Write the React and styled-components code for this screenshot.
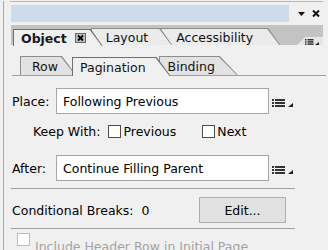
import React from "react";
import styled, { createGlobalStyle } from "styled-components";

const GlobalStyle = createGlobalStyle`
  html, body {
    margin: 0;
    padding: 0;
    background: #f0f0f0;
  }
  body {
    font-family: "DejaVu Sans", "Liberation Sans", sans-serif;
    font-size: 12.5px;
    color: #000;
    overflow: hidden;
  }
`;

const Window = styled.div`
  margin-left: 3px;
  width: 325px;
  height: 250px;
  border-left: 1px solid #a8a8a8;
  box-sizing: border-box;
`;

const Header = styled.div`
  margin: 1px 0 0 6px;
  width: 313px;
  border-top: 1px solid #b8b8b8;
  padding-left: 1px;
  box-sizing: border-box;
`;

const TitleBar = styled.div`
  display: flex;
  align-items: center;
  margin-top: 3px;
  height: 17px;
`;

const Grip = styled.div`
  width: 278px;
  height: 17px;
  background: #cddcea;
`;

const CtrlIcon = styled.svg`
  display: block;
  margin-left: ${(p) => p.$gap}px;
`;

const TabStrip = styled.div`
  display: flex;
  align-items: flex-end;
  margin-top: 3px;
  width: 312px;
  height: 20px;
  padding-left: 2px;
  box-sizing: border-box;
  background: #c3c3c3;
`;

const Tab = styled.div`
  position: relative;
  z-index: ${(p) => p.$z};
  height: ${(p) => p.$h}px;
  margin-left: ${(p) => p.$overlap}px;
  margin-bottom: ${(p) => (p.$active ? -1 : 0)}px;
  padding: 1px 1px 0 1px;
  box-sizing: border-box;
  background: ${(p) => (p.$active ? "#6f6f6f" : "#8d8d8d")};
  clip-path: polygon(0 0, calc(100% - ${(p) => p.$slant}px) 0, 100% 100%, 0 100%);
`;

const TabFace = styled.div`
  display: flex;
  align-items: center;
  gap: 8px;
  height: 100%;
  padding: ${(p) => p.$pad};
  box-sizing: border-box;
  white-space: nowrap;
  font-weight: ${(p) => (p.$bold ? 700 : 400)};
  color: ${(p) => (p.$bold ? "#1a1a1a" : "#111")};
  background: ${(p) => (p.$active ? "#f0f0f0" : p.$fill)};
  clip-path: polygon(0 0, calc(100% - ${(p) => p.$slant}px) 0, 100% 100%, 0 100%);
`;

const StripMenu = styled.div`
  display: flex;
  align-items: flex-end;
  justify-content: flex-end;
  margin-left: auto;
  width: 26px;
  height: 8px;
  padding-right: 4px;
  box-sizing: border-box;
  background: #e6e6e6;
  clip-path: polygon(8px 0, 100% 0, 100% 100%, 0 100%);
`;

const Body = styled.div`
  padding: 0 2px 0 8px;
`;

const SubTabBar = styled.div`
  display: flex;
  align-items: flex-end;
  height: 30px;
  padding-left: 8px;
  border-bottom: 1px solid #a0a0a0;
  box-sizing: content-box;
`;

const FieldRow = styled.div`
  display: flex;
  align-items: center;
  margin-top: ${(p) => p.$top}px;
`;

const Label = styled.span`
  width: ${(p) => p.$w}px;
  flex: none;
`;

const Field = styled.div`
  display: flex;
  align-items: center;
  width: 213px;
  height: 26px;
  padding-left: 6px;
  box-sizing: border-box;
  background: #fff;
  border: 1px solid #a6a6a6;
`;

const MenuIcon = styled.svg`
  display: block;
  margin-left: 3px;
  margin-top: 3px;
`;

const KeepRow = styled.div`
  display: flex;
  align-items: center;
  height: 34px;
  padding-left: 21px;
`;

const Check = styled.span`
  display: inline-block;
  flex: none;
  width: 13px;
  height: 13px;
  box-sizing: border-box;
  margin: 0 2px 0 ${(p) => p.$gap}px;
  background: #fff;
  border: 1px solid ${(p) => (p.$disabled ? "#bcbcbc" : "#4d4d4d")};
`;

const Rule = styled.div`
  margin: ${(p) => p.$top}px 0 0 -1px;
  width: 284px;
  height: 1px;
  background: #a0a0a0;
`;

const BreaksRow = styled.div`
  display: flex;
  align-items: center;
  margin-top: 8px;
`;

const Button = styled.div`
  display: flex;
  align-items: center;
  justify-content: center;
  width: 87px;
  height: 26px;
  box-sizing: border-box;
  background: #e1e1e1;
  border: 1px solid #adadad;
`;

const OptionRow = styled.div`
  display: flex;
  align-items: flex-start;
  margin-top: 4px;
  padding-left: 5px;
  color: #a3a3a3;
`;

const OptionText = styled.span`
  padding: 6px 0 0 3px;
  white-space: nowrap;
`;

const ListMenu = () => (
  <MenuIcon width="21" height="8" viewBox="0 0 21 8">
    <rect x="0" y="0" width="2" height="2" fill="#333" />
    <rect x="0" y="3" width="2" height="2" fill="#333" />
    <rect x="0" y="6" width="2" height="2" fill="#333" />
    <rect x="3" y="0" width="10" height="2" fill="#333" />
    <rect x="3" y="3" width="10" height="2" fill="#333" />
    <rect x="3" y="6" width="10" height="2" fill="#333" />
    <polygon points="16,8 21,8 21,4" fill="#222" />
  </MenuIcon>
);

const mainTabs = [
  { label: "Object", active: true, pad: "0 16px 0 7px", overlap: 0 },
  { label: "Layout", pad: "0 23px 0 14px", overlap: -12 },
  { label: "Accessibility", pad: "0 26px 0 15px", overlap: -12 },
];

const subTabs = [
  { label: "Row", pad: "0 17px 0 11px", overlap: 0, slant: 14 },
  { label: "Pagination", active: true, pad: "0 24px 0 7px", overlap: -4, slant: 14 },
  { label: "Binding", pad: "0 22px 0 8px", overlap: -12, slant: 18 },
];

export default function App() {
  return (
    <>
      <GlobalStyle />
      <Window>
        <Header>
          <TitleBar>
            <Grip />
            <CtrlIcon $gap={9} width="7" height="4" viewBox="0 0 7 4">
              <polygon points="0,0 7,0 3.5,4" fill="#111" />
            </CtrlIcon>
            <CtrlIcon $gap={7} width="8" height="7" viewBox="0 0 8 7">
              <path d="M1 0.5 L7 6.5 M7 0.5 L1 6.5" stroke="#111" strokeWidth="2" />
            </CtrlIcon>
          </TitleBar>
          <TabStrip>
            {mainTabs.map((t, i) => (
              <Tab
                key={t.label}
                $h={17}
                $z={t.active ? 10 : 5 - i}
                $overlap={t.overlap}
                $active={t.active}
                $slant={12}
              >
                <TabFace $pad={t.pad} $active={t.active} $bold={t.active} $fill="#ebebeb" $slant={12}>
                  {t.label}
                  {t.active && (
                    <svg width="11" height="10" viewBox="0 0 11 10">
                      <rect x="0.5" y="0.5" width="10" height="9" fill="#bdbdbd" stroke="#6a6a6a" />
                      <path d="M3 2.5 L8 7.5 M8 2.5 L3 7.5" stroke="#000" strokeWidth="1.8" />
                    </svg>
                  )}
                </TabFace>
              </Tab>
            ))}
            <StripMenu>
              <svg width="14" height="6" viewBox="0 0 14 6">
                <rect x="0" y="0" width="1.5" height="1.5" fill="#333" />
                <rect x="0" y="2.2" width="1.5" height="1.5" fill="#333" />
                <rect x="0" y="4.4" width="1.5" height="1.5" fill="#333" />
                <rect x="2.5" y="0" width="6" height="1.5" fill="#333" />
                <rect x="2.5" y="2.2" width="6" height="1.5" fill="#333" />
                <rect x="2.5" y="4.4" width="6" height="1.5" fill="#333" />
                <polygon points="10,6 14,6 14,3" fill="#222" />
              </svg>
            </StripMenu>
          </TabStrip>
        </Header>
        <Body>
          <SubTabBar>
            {subTabs.map((t, i) => (
              <Tab
                key={t.label}
                $h={19}
                $z={t.active ? 10 : 5 - i}
                $overlap={t.overlap}
                $active={t.active}
                $slant={t.slant}
              >
                <TabFace $pad={t.pad} $active={t.active} $fill="#e2e2e2" $slant={t.slant}>
                  {t.label}
                </TabFace>
              </Tab>
            ))}
          </SubTabBar>

          <FieldRow $top={12}>
            <Label $w={44}>Place:</Label>
            <Field>Following Previous</Field>
            <ListMenu />
          </FieldRow>

          <KeepRow>
            Keep With:
            <Check $gap={8} />
            Previous
            <Check $gap={26} />
            Next
          </KeepRow>

          <FieldRow $top={7}>
            <Label $w={44}>After:</Label>
            <Field>Continue Filling Parent</Field>
            <ListMenu />
          </FieldRow>

          <Rule $top={7} />

          <BreaksRow>
            <Label $w={187}>Conditional Breaks:&nbsp; 0</Label>
            <Button>Edit...</Button>
          </BreaksRow>

          <Rule $top={5} />

          <OptionRow>
            <Check $gap={0} $disabled />
            <OptionText>Include Header Row in Initial Page</OptionText>
          </OptionRow>
        </Body>
      </Window>
    </>
  );
}
